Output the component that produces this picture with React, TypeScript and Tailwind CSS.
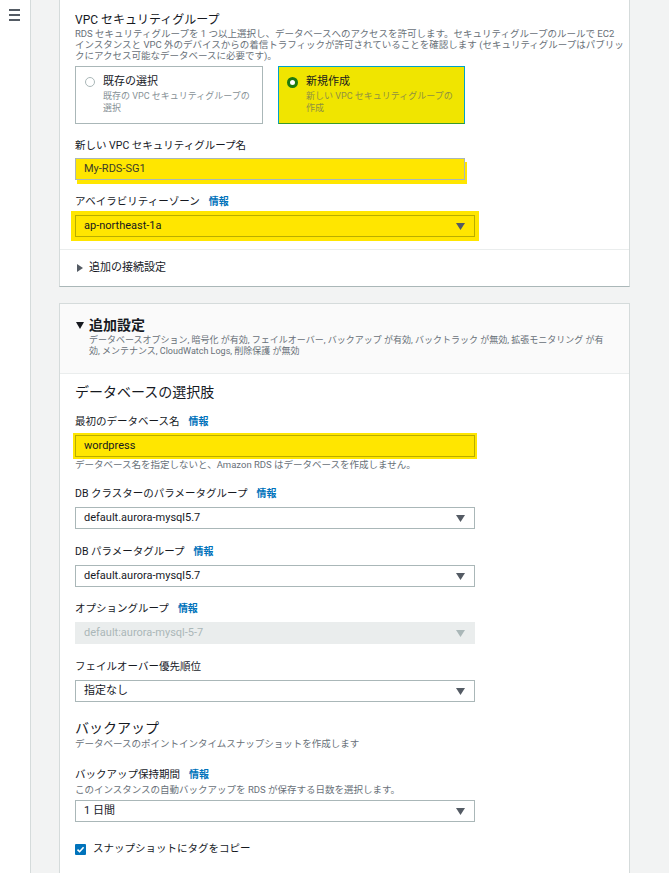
import React from "react";

const FONT = "font-['Roboto','Noto_Sans_CJK_JP',sans-serif]";

function Caret({ disabled }: { disabled?: boolean }) {
  return (
    <svg width="9" height="7" viewBox="0 0 9 7" className="shrink-0">
      <polygon points="0,0 9,0 4.5,7" fill={disabled ? "#aab7b8" : "#545b64"} />
    </svg>
  );
}

function Info() {
  return <span className="ml-[9px] text-[10px] font-semibold text-[#0073bb]">情報</span>;
}

function Label({ text, info, className = "" }: { text: string; info?: boolean; className?: string }) {
  return (
    <div className={`flex items-center text-[10.5px] leading-[16px] text-[#16191f] ${className}`}>
      {text}
      {info && <Info />}
    </div>
  );
}

function Hint({ text, className = "" }: { text: string; className?: string }) {
  return <p className={`text-[9.5px] leading-[12px] text-[#687078] ${className}`}>{text}</p>;
}

function Select({ value, className = "", disabled, highlight }: { value: string; className?: string; disabled?: boolean; highlight?: boolean }) {
  const look = disabled
    ? "border-[#eaeded] bg-[#eaeded] text-[#aab7b8]"
    : highlight
    ? "border-[#b9ae00] bg-[#ffe600] text-[#16191f] shadow-[0_0_0_4px_#ffe600]"
    : "border-[#aab7b8] bg-white text-[#16191f]";
  return (
    <div className={`flex h-[22px] w-[400px] items-center justify-between border pl-[8px] pr-[9px] text-[11px] ${look} ${className}`}>
      <span>{value}</span>
      <Caret disabled={disabled} />
    </div>
  );
}

function RadioCard({ title, desc, selected, className = "" }: { title: string; desc: string[]; selected?: boolean; className?: string }) {
  return (
    <div
      className={`flex h-[58px] gap-[8px] border pl-[8px] pt-[7px] ${
        selected ? "border-[#00a1c9] border-b-[#3a9a2a] bg-[#f0e500]" : "border-[#aab7b8] bg-white"
      } ${className}`}
    >
      <div className="flex h-[16px] items-center">
        {selected ? (
          <span className="block h-[11px] w-[11px] rounded-full border-[3px] border-[#1e7a10] bg-white" />
        ) : (
          <span className="ml-[1px] block h-[10px] w-[10px] rounded-full border border-[#aab7b8] bg-white" />
        )}
      </div>
      <div>
        <div className="text-[11px] leading-[16px] text-[#16191f]">{title}</div>
        {desc.map((d) => (
          <div key={d} className={`whitespace-nowrap text-[9px] leading-[12px] ${selected ? "text-[#8f9140]" : "text-[#879196]"}`}>
            {d}
          </div>
        ))}
      </div>
    </div>
  );
}

export default function App() {
  return (
    <div className={`flex min-h-[873px] w-[669px] overflow-hidden bg-[#f2f3f3] ${FONT}`}>
      <aside className="w-[31px] shrink-0 border-r border-[#d5dbdb] bg-white">
        <div className="ml-[9px] mt-[9px] flex w-[11px] flex-col gap-[3px]">
          <span className="h-[2px] bg-[#545b64]" />
          <span className="h-[2px] bg-[#545b64]" />
          <span className="h-[2px] bg-[#545b64]" />
        </div>
      </aside>

      <main className="w-[570px] shrink-0 pl-[28px]">
        <section className="w-[571px] border-x border-b border-[#d5dbdb] border-b-[#aab7b8] bg-white">
          <div className="px-[15px] pt-[12px]">
            <div className="text-[12px] leading-[16px] text-[#16191f]">VPC セキュリティグループ</div>
            <div className="whitespace-nowrap text-[9.5px] leading-[11px] text-[#687078]">
              <p>RDS セキュリティグループを 1 つ以上選択し、データベースへのアクセスを許可します。セキュリティグループのルールで EC2</p>
              <p>インスタンスと VPC 外のデバイスからの着信トラフィックが許可されていることを確認します (セキュリティグループはパブリッ</p>
              <p>クにアクセス可能なデータベースに必要です)。</p>
            </div>
            <div className="mt-[5px] flex gap-[15px]">
              <RadioCard className="w-[188px]" title="既存の選択" desc={["既存の VPC セキュリティグループの", "選択"]} />
              <RadioCard className="w-[187px]" title="新規作成" desc={["新しい VPC セキュリティグループの", "作成"]} selected />
            </div>

            <Label className="mt-[14px]" text="新しい VPC セキュリティグループ名" />
            <div className="mt-[4px] flex h-[22px] w-[390px] items-center border border-[#aab7b8] bg-[#ffe600] pl-[8px] text-[11px] text-[#3b3b2a] shadow-[2px_4px_0_0_#ffe600]">
              My-RDS-SG1
            </div>

            <Label className="mt-[14px]" text="アベイラビリティーゾーン" info />
            <Select className="mt-[5px]" value="ap-northeast-1a" highlight />
          </div>
          <div className="mt-[12px] flex items-center gap-[6px] border-t border-[#eaeded] px-[17px] pb-[10px] pt-[10px] text-[11px] leading-[16px] text-[#16191f]">
            <svg width="6" height="8" viewBox="0 0 6 8">
              <polygon points="0,0 6,4 0,8" fill="#545b64" />
            </svg>
            追加の接続設定
          </div>
        </section>

        <section className="mt-[16px] w-[571px] border border-[#d5dbdb] bg-white pb-[40px]">
          <div className="border-b border-[#eaeded] bg-[#fafafa] pb-[16px] pl-[16px] pr-[18px] pt-[11px]">
            <div className="flex items-center gap-[5px] text-[14px] font-bold leading-[20px] text-[#16191f]">
              <svg width="8" height="7" viewBox="0 0 8 7">
                <polygon points="0,0 8,0 4,7" fill="#16191f" />
              </svg>
              追加設定
            </div>
            <div className="whitespace-nowrap pl-[13px] text-[9px] leading-[11px] text-[#687078]">
              <p>データベースオプション, 暗号化 が有効, フェイルオーバー, バックアップ が有効, バックトラック が無効, 拡張モニタリング が有</p>
              <p>効, メンテナンス, CloudWatch Logs, 削除保護 が無効</p>
            </div>
          </div>

          <div className="px-[15px] pt-[8px]">
            <h2 className="text-[14px] leading-[20px] text-[#16191f]">データベースの選択肢</h2>

            <Label className="mt-[12px]" text="最初のデータベース名" info />
            <div className="mt-[5px] flex h-[22px] w-[400px] items-center border border-[#b9ae00] bg-[#ffe600] pl-[8px] text-[11px] text-[#16191f] shadow-[0_0_0_2px_#ffe600]">
              wordpress
            </div>
            <Hint className="mt-[2px]" text="データベース名を指定しないと、Amazon RDS はデータベースを作成しません。" />

            <Label className="mt-[15px]" text="DB クラスターのパラメータグループ" info />
            <Select className="mt-[5px]" value="default.aurora-mysql5.7" />

            <Label className="mt-[15px]" text="DB パラメータグループ" info />
            <Select className="mt-[5px]" value="default.aurora-mysql5.7" />

            <Label className="mt-[14px]" text="オプショングループ" info />
            <Select className="mt-[5px]" value="default:aurora-mysql-5-7" disabled />

            <Label className="mt-[15px]" text="フェイルオーバー優先順位" />
            <Select className="mt-[5px]" value="指定なし" />

            <h2 className="mt-[16px] text-[14px] leading-[20px] text-[#16191f]">バックアップ</h2>
            <Hint text="データベースのポイントインタイムスナップショットを作成します" />

            <Label className="mt-[17px]" text="バックアップ保持期間" info />
            <Hint className="mt-[1px]" text="このインスタンスの自動バックアップを RDS が保存する日数を選択します。" />
            <Select className="mt-[4px]" value="1 日間" />

            <div className="mt-[19px] flex items-center gap-[7px] text-[10.5px] leading-[16px] text-[#16191f]">
              <span className="flex h-[11px] w-[11px] items-center justify-center rounded-[1px] bg-[#0073bb]">
                <svg width="9" height="9" viewBox="0 0 9 9">
                  <path d="M1.5 4.6 L3.6 6.7 L7.6 2.2" stroke="white" strokeWidth="1.6" fill="none" />
                </svg>
              </span>
              スナップショットにタグをコピー
            </div>
          </div>
        </section>
      </main>
    </div>
  );
}
